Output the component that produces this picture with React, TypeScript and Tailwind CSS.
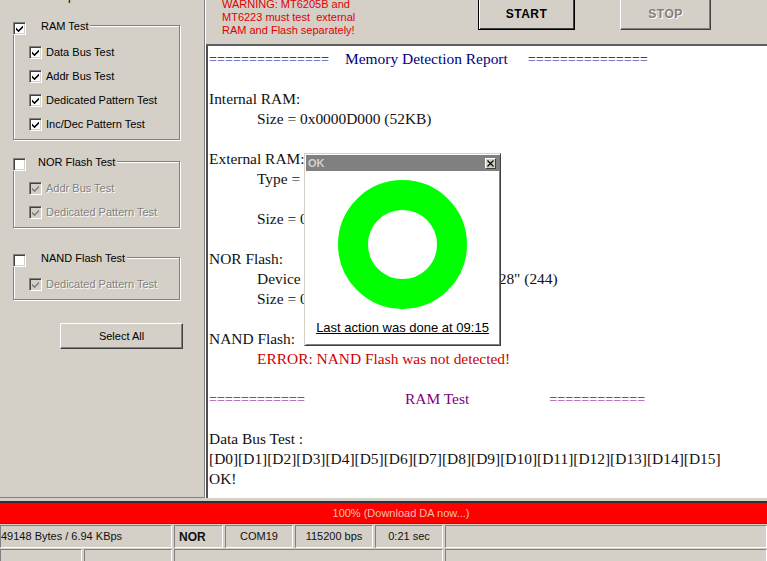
import React from "react";

const uiFont = "font-['Liberation_Sans',Arial,sans-serif]";

const CheckBox = ({ checked = false, disabled = false }: { checked?: boolean; disabled?: boolean }) => (
  <span
    className={`flex h-[13px] w-[13px] shrink-0 items-center justify-center border-t border-l border-t-[#808080] border-l-[#808080] border-r border-b border-r-white border-b-white shadow-[inset_1px_1px_0_#404040,inset_-1px_-1px_0_#d4d0c8] ${
      disabled ? "bg-[#d4d0c8]" : "bg-white"
    }`}
  >
    {checked && (
      <svg width="9" height="9" viewBox="0 0 9 9">
        <path
          d="M1 3.5 L3.5 6 L8 1.5 L8 3.7 L3.5 8.2 L1 5.7 Z"
          fill={disabled ? "#808080" : "#000000"}
        />
      </svg>
    )}
  </span>
);

const TestRow = ({ label, disabled = false }: { label: string; disabled?: boolean }) => (
  <div className="flex h-6 items-center gap-[4px] pl-[15px]">
    <CheckBox checked disabled={disabled} />
    <span className={disabled ? "text-[#808080] [text-shadow:1px_1px_0_#ffffff]" : "text-black"}>{label}</span>
  </div>
);

const GroupBox = ({
  title,
  titleGap,
  className,
  children,
}: {
  title: string;
  titleGap: string;
  className: string;
  children: React.ReactNode;
}) => (
  <div className={`ml-[13px] w-[167px] border border-[#808080] shadow-[1px_1px_0_#ffffff,inset_1px_1px_0_#ffffff] ${className}`}>
    <div className="-mt-[4px] flex h-[13px] w-fit items-center bg-[#d4d0c8] pr-[2px] -ml-px">
      <CheckBox checked={title === "RAM Test"} />
      <span className={`${titleGap} mb-[4px] text-black`}>{title}</span>
    </div>
    <div className="pt-[5px]">{children}</div>
  </div>
);

const Win98Button = ({ children, className }: { children: React.ReactNode; className: string }) => (
  <div
    className={`flex items-center justify-center bg-[#d4d0c8] border-t border-l border-t-white border-l-white border-r border-b border-r-[#404040] border-b-[#404040] shadow-[inset_-1px_-1px_0_#808080] ${className}`}
  >
    {children}
  </div>
);

const StatusCell = ({ className, children }: { className: string; children?: React.ReactNode }) => (
  <div
    className={`flex items-center justify-center overflow-hidden whitespace-nowrap border-t border-l border-t-[#808080] border-l-[#808080] border-r border-b border-r-white border-b-white ${className}`}
  >
    {children}
  </div>
);

const Line = ({ children, className = "" }: { children?: React.ReactNode; className?: string }) => (
  <div className={`h-5 whitespace-pre ${className}`}>{children}</div>
);

const Rule = ({ children }: { children: string }) => <span className="text-[14.2px]">{children}</span>;

export default function App() {
  return (
    <div className={`relative flex h-[561px] w-[767px] flex-col overflow-hidden bg-[#d4d0c8] text-[11px] leading-none ${uiFont}`}>
      <div className="flex h-[498px] shrink-0">
        {/* left option panel */}
        <div className="h-full w-[205px] shrink-0 overflow-hidden border-r border-b border-r-[#808080] border-b-[#808080] shadow-[1px_0_0_#ffffff]">
          <div className="h-[25px] overflow-hidden pl-[68px]">
            <span className="-mt-[10px] block text-[12px] text-black">p</span>
          </div>
          <GroupBox title="RAM Test" titleGap="ml-[15px]" className="h-[115px]">
            <TestRow label="Data Bus Test" />
            <TestRow label="Addr Bus Test" />
            <TestRow label="Dedicated Pattern Test" />
            <TestRow label="Inc/Dec Pattern Test" />
          </GroupBox>
          <GroupBox title="NOR Flash Test" titleGap="ml-[12px]" className="mt-[21px] h-[67px]">
            <TestRow label="Addr Bus Test" disabled />
            <TestRow label="Dedicated Pattern Test" disabled />
          </GroupBox>
          <GroupBox title="NAND Flash Test" titleGap="ml-[15px]" className="mt-[29px] h-[43px]">
            <TestRow label="Dedicated Pattern Test" disabled />
          </GroupBox>
          <Win98Button className="ml-[60px] mt-[23px] h-[26px] w-[123px] text-black">Select All</Win98Button>
        </div>

        {/* right side */}
        <div className="ml-px flex min-w-0 flex-1 flex-col">
          <div className="relative flex h-[44px] shrink-0 overflow-hidden">
            <div className="ml-[16px] -mt-[2px] w-[240px] shrink-0 leading-[13px] text-[#e00000]">
              <div>WARNING: MT6205B and</div>
              <div className="whitespace-pre">MT6223 must test  external</div>
              <div>RAM and Flash separately!</div>
            </div>
            <div className="-mt-[10px] ml-[16px] flex h-[40px] w-[97px] shrink-0 items-center justify-center border border-black bg-[#d4d0c8] pt-[8px] text-[12px] font-bold tracking-[0.5px] text-black shadow-[inset_1px_1px_0_#ffffff,inset_-1px_-1px_0_#404040]">
              START
            </div>
            <Win98Button className="-mt-[10px] ml-[45px] h-[40px] w-[91px] shrink-0 pt-[8px] text-[12px] font-bold tracking-[0.5px] text-[#808080] [text-shadow:1px_1px_0_#ffffff]">
              STOP
            </Win98Button>
          </div>

          {/* report */}
          <div className="h-[454px] w-[600px] border-t-2 border-l-2 border-t-[#606060] border-l-[#505050] bg-white pl-[1px] pt-[3px] font-['Liberation_Serif','Times_New_Roman',serif] text-[15.43px] leading-5 text-[#111111]">
            <Line className="text-[#000080]">
              <Rule>===============</Rule>
              <span className="ml-[16px]">Memory Detection Report</span>
              <span className="ml-[20px]">
                <Rule>===============</Rule>
              </span>
            </Line>
            <Line />
            <Line>Internal RAM:</Line>
            <Line className="pl-[48px]">Size = 0x0000D000 (52KB)</Line>
            <Line />
            <Line>External RAM:</Line>
            <Line className="pl-[48px]">Type =</Line>
            <Line />
            <Line className="pl-[48px]">Size = 0x</Line>
            <Line />
            <Line>NOR Flash:</Line>
            <Line className="pl-[48px]">
              Device<span className="ml-[198px]">28" (244)</span>
            </Line>
            <Line className="pl-[48px]">Size = 0x</Line>
            <Line />
            <Line>NAND Flash:</Line>
            <Line className="pl-[48px] text-[#d00000]">ERROR: NAND Flash was not detected!</Line>
            <Line />
            <Line className="text-[#800080]">
              <Rule>============</Rule>
              <span className="ml-[100px]">RAM Test</span>
              <span className="ml-[80px]">
                <Rule>============</Rule>
              </span>
            </Line>
            <Line />
            <Line>Data Bus Test :</Line>
            <Line>[D0][D1][D2][D3][D4][D5][D6][D7][D8][D9][D10][D11][D12][D13][D14][D15]</Line>
            <Line>OK!</Line>
          </div>
        </div>
      </div>

      {/* progress bar */}
      <div className="mt-[3px] flex h-[23px] shrink-0 items-center justify-center border-t-2 border-t-[#303030] border-b border-b-[#404040] bg-[#ff0000] pl-[35px] text-[#eec0b0]">
        100% (Download DA now...)
      </div>

      {/* status bars */}
      <div className="mt-px flex h-[23px] shrink-0 gap-[2px] text-[#111111]">
        <StatusCell className="w-[172px] !justify-start">49148 Bytes / 6.94 KBps</StatusCell>
        <StatusCell className="w-[49px] !justify-start pl-[4px] text-[12px] font-bold">NOR</StatusCell>
        <StatusCell className="w-[68px]">COM19</StatusCell>
        <StatusCell className="w-[78px]">115200 bps</StatusCell>
        <StatusCell className="w-[68px]">0:21 sec</StatusCell>
        <StatusCell className="flex-1" />
      </div>
      <div className="mt-px flex h-[14px] shrink-0 gap-[2px]">
        <StatusCell className="w-[82px]" />
        <StatusCell className="w-[88px]" />
        <StatusCell className="w-[269px]" />
        <StatusCell className="flex-1" />
      </div>

      {/* OK popup */}
      <div className="absolute left-[304px] top-[153px] flex h-[193px] w-[197px] flex-col border border-t-[#d4d0c8] border-l-[#d4d0c8] border-r-[#404040] border-b-[#404040] bg-white shadow-[inset_1px_1px_0_#ffffff,inset_-1px_-1px_0_#808080]">
        <div className="mx-[1px] mt-[1px] flex h-[16px] shrink-0 items-center justify-between bg-[#808080] px-[2px]">
          <span className="text-[11px] font-bold text-[#d4d0c8]">OK</span>
          <span className="mr-[1px] flex h-[11px] w-[11px] items-center justify-center border border-t-white border-l-white border-r-[#404040] border-b-[#404040] bg-[#d4d0c8]">
            <svg width="7" height="7" viewBox="0 0 7 7">
              <path d="M0.5 0.5 L6.5 6.5 M6.5 0.5 L0.5 6.5" stroke="#000000" strokeWidth="1.2" />
            </svg>
          </span>
        </div>
        <div className="mx-auto mt-[9px] h-[129px] w-[129px] shrink-0 rounded-full border-[30px] border-[#00ff00] bg-white" />
        <div className="mt-[12px] text-center text-[13px] text-black underline">Last action was done at 09:15</div>
      </div>
    </div>
  );
}
